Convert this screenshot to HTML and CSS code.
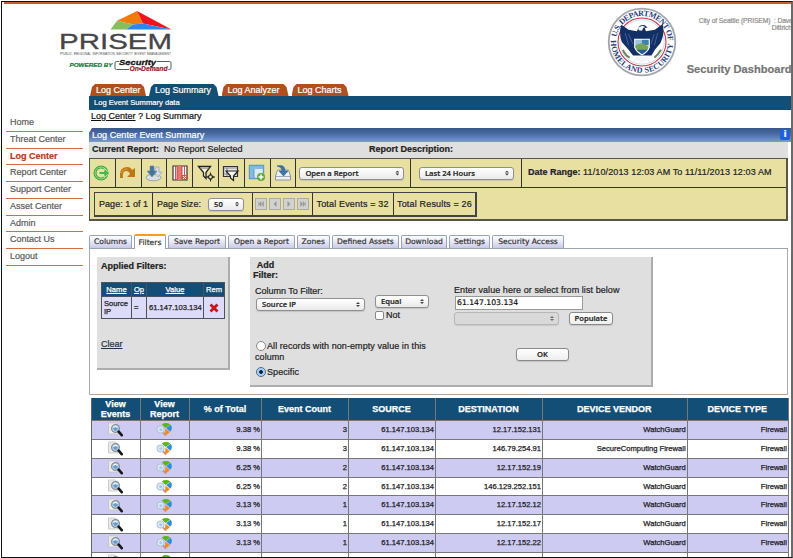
FILE: index.html
```html
<!DOCTYPE html>
<html lang="en">
<head>
<meta charset="utf-8">
<title>Security Dashboard</title>
<link rel="stylesheet" href="styles.css">
</head>
<body>
<svg class="defs" width="0" height="0">
  <symbol id="view" viewBox="0 1 16 15">
    <path d="M1 2h7l2 2v9H1z" fill="#f4f4f4" stroke="#c0c0c0" stroke-width=".8"/>
    <path d="M2.500 12V4l2-1" fill="none" stroke="#ddd"/>
    <circle cx="8" cy="7.500" r="3.900" fill="#b9d8f2" stroke="#8a8f96" stroke-width="1.300"/>
    <circle cx="8" cy="7.600" r="2.300" fill="#6a9dce"/>
    <path d="M6 6.600q2-2.400 4 0" fill="none" stroke="#e9f5ff" stroke-width="1.200"/>
    <path d="M11.200 10.600l3 3.600" stroke="#16181c" stroke-width="2.600" stroke-linecap="round"/>
  </symbol>
  <symbol id="pie" viewBox="0 0 16 14">
    <path d="M9 5.500L5.500 2.200Q9-.6 13.600 2.200z" fill="#5cb41c"/>
    <path d="M9.600 5.500l4.300-3q2.400 3.600-.6 6.500z" fill="#2c8fdc"/>
    <path d="M9 6l3.900 3.600Q11 12 8.300 12z" fill="#f58a1c"/>
    <path d="M6.300 9.400l3.200 3.300" stroke="#c98e76" stroke-width="1.700"/>
    <circle cx="4.300" cy="7" r="3.300" fill="#d8e8f6" stroke="#b4c2d2"/>
    <circle cx="4.500" cy="7.300" r="1.400" fill="#a9c8e8"/>
  </symbol>
</svg>
<div class="frame">
<header class="top">
  <svg class="logo" width="120" height="70" viewBox="56 6 120 70">
    <path d="M117 20.800L137 11l6 12.500-10 1z" fill="#f57a0c"/>
    <path d="M137 11l34.500 18.500L143 23.500z" fill="#f0131c"/>
    <path d="M117 20.800L133 24.500l-7 5h-15.500z" fill="#86bf5c"/>
    <path d="M133 24.500l10-1 28.500 6H126z" fill="#2f86ee"/>
    <text class="l-name" x="59" y="48.600" textLength="113" lengthAdjust="spacingAndGlyphs">PRISEM</text>
    <text class="l-sub" x="60" y="55.300" textLength="111" lengthAdjust="spacingAndGlyphs">Public Regional Information Security Event Management</text>
    <text class="l-pow" x="69.500" y="66.800" textLength="43" lengthAdjust="spacingAndGlyphs">POWERED BY</text>
    <path d="M119 61.500h-2.500q-1.500 0-1.500 1.500v5q0 1.500 1.500 1.500H129M157 61.500h12.500q1.500 0 1.500 1.500v5q0 1.500-1.500 1.500H168.500" fill="none" stroke="#35513f" stroke-width=".9"/>
    <text class="l-sec" x="119" y="65.200" textLength="37" lengthAdjust="spacingAndGlyphs">Security</text>
    <text class="l-dem" x="129.500" y="71" textLength="38" lengthAdjust="spacingAndGlyphs">On•Demand</text>
  </svg>
  <svg class="seal" width="70" height="70" viewBox="-35 -35 70 70">
    <circle r="33.300" fill="#fff" stroke="#a2a5ab" stroke-width="1.800"/>
    <path id="arcT" d="M-22.800 12.700A26.100 26.100 0 1 1 24.500 9" fill="none"/>
    <path id="arcB" d="M-31 -2.700A31.100 31.100 0 1 0 31 -2.700" fill="none"/>
    <text class="s-txt"><textPath href="#arcT" startOffset="18" textLength="76">U.S. DEPARTMENT OF</textPath></text>
    <text class="s-txt"><textPath href="#arcB" startOffset="1" textLength="97">HOMELAND SECURITY</textPath></text>
    <circle r="24" fill="#fff" stroke="#c33a50" stroke-width="1.100"/>
    <g transform="scale(1.120)">
    <circle r="19.800" fill="#fff" stroke="#c9d4e4" stroke-width=".8"/>
    <path d="M-3-13.500Q-1-16 2.500-15l2.500 2-2.500.5 1 3 8-1.500 7-5q2 9-2 17l-5 6-3 5H-8l-4-5-6-7q-3-8-.5-15.500L-12-11l7.500 1.500z" fill="#122f66"/>
    <path d="M-3.500-13l4-1.500 2.500 1-2 1-1 2.500-3-.5zM-5 13l-3 5 4-2 4 3 4-3 4 2-3-5z" fill="#f2f5f8"/>
    <path d="M-15-8l3 11M-12-7l4 9M14-8l-3 11M11-7L8 2" stroke="#46669b" stroke-width=".8"/>
    <path d="M-7-3h14v8q-2 5-7 7-5-2-7-7z" fill="#fff"/>
    <path d="M-6-2H0v5h-6z" fill="#9cc4dc"/><path d="M0-2h6v5H0z" fill="#3f83ae"/><path d="M-6 3L0 1l6 3q-1 5-6 7-4-2-6-6z" fill="#76a65a"/><path d="M-5 7h10l-5 4z" fill="#285a99"/>
    <path d="M-17 7q2 5 6 7M17 7q-3 5-6 7" stroke="#658760" stroke-width="1.800" fill="none"/>
    </g>
  </svg>
  <div class="who">
    <div class="user">City of Seattle (PRISEM)&nbsp; : Dave<br><span>Dittrich</span></div>
    <div class="dash">Security Dashboard</div>
  </div>
</header>
<div class="body">
<nav class="side">
  <a>Home</a><a>Threat Center</a><a class="on">Log Center</a><a>Report Center</a><a>Support Center</a><a>Asset Center</a><a>Admin</a><a>Contact Us</a><a>Logout</a>
</nav>
<main>
  <div class="maintabs"><span class="t1">Log Center</span><span class="t2 on">Log Summary</span><span class="t3">Log Analyzer</span><span class="t4">Log Charts</span></div>
  <div class="sub">Log Event Summary data</div>
  <div class="crumb"><u>Log Center</u> ? Log Summary</div>
  <div class="title"><span>Log Center Event Summary</span><i>i</i></div>
  <div class="report"><div><b>Current Report:</b><span>No Report Selected</span></div><b>Report Description:</b></div>
  <div class="tools">
    <div class="row1">
      <div class="ic"><svg viewBox="0 0 18 18"><circle cx="8" cy="9" r="6" fill="none" stroke="#42a63a" stroke-width="3"/><circle cx="8" cy="9" r="6" fill="none" stroke="#9bdc8b" stroke-width="1"/><path d="M6 7.500h5V4.500l6 4.500-6 4.500v-3H6z" fill="#4bb93d" stroke="#eaf7df" stroke-width=".7"/></svg></div>
      <div class="ic"><svg viewBox="0 0 18 18"><path d="M1 14Q0 3 8 3q4 0 5 3l3-2v9H8l3-3q-1-3-4-3-4 0-3 7z" fill="#bd7813"/><path d="M2.500 9Q4 4.500 8.500 5" stroke="#e0a447" fill="none"/></svg></div>
      <div class="ic"><svg viewBox="0 0 18 18"><ellipse cx="8.500" cy="13.500" rx="7.500" ry="3.300" fill="#d9dee3" stroke="#96a1ab"/><path d="M11 3h3v5h3l-4 5-4-5z" fill="#d6dce2" stroke="#98a4af" stroke-width=".7"/><path d="M5 2h4v5h3l-5 6-5-6h3z" fill="#47749b" stroke="#6d8ba5" stroke-width=".6"/></svg></div>
      <div class="ic"><svg viewBox="0 0 18 18"><path d="M2 2h14v14H2z" fill="#fff" stroke="#333" stroke-width="1.200"/><path d="M6 2h5v14H6z" fill="#e9776b"/><path d="M4.500 2v14M6 2v14M11 2v14M13.500 2v9" stroke="#a33" stroke-width=".8"/><path d="M11 11h5v5h-5z" fill="#df4e42"/><path d="M12 12l3 3m0-3l-3 3" stroke="#fff"/></svg></div>
      <div class="ic"><svg viewBox="0 0 18 18"><path d="M1.500 2.500h12L9 8.500v6L6.500 12V8.500z" fill="#f5f2cf" stroke="#222" stroke-width="1.300"/><path d="M3.500 4.300h8" stroke="#999"/><path d="M13.500 9.500L17 13l-3.500 3.500L10 13z" fill="#222"/><path d="M13.500 8.500v9M9 13h9" stroke="#222" stroke-width="1"/><circle cx="13.500" cy="13" r="1.400" fill="#e6dfa0"/></svg></div>
      <div class="ic"><svg viewBox="0 0 18 18"><path d="M1.500 2.500h14v10h-14z" fill="#e5e7e5" stroke="#333" stroke-width="1.200"/><path d="M2 4h13M2 10h13M5 4v8" stroke="#888" stroke-width="1.200"/><path d="M4 7h12l-4.500 5v4.500L8.500 14v-2z" fill="#f7f7f0" stroke="#222" stroke-width="1.200"/></svg></div>
      <div class="ic"><svg viewBox="0 0 18 18"><path d="M1.500 1.500h14v13h-14z" fill="#dceaf3" stroke="#5b9cc9" stroke-width="1.400"/><path d="M2 2h13v3H6v9H2z" fill="#83badd"/><path d="M6 5v9" stroke="#5b9cc9"/><circle cx="13" cy="13" r="4" fill="#62ab37"/><path d="M13 10.500v5M10.500 13h5" stroke="#fff" stroke-width="1.500"/></svg></div>
      <div class="ic"><svg viewBox="0 0 18 18"><path d="M3.500 6h11l2 6v4h-15v-4z" fill="#edf0f2" stroke="#8994a0"/><path d="M2 12.500h14" stroke="#a2abb4"/><path d="M3 2q8-2 8 5h3l-4.500 5L5 7h3Q8 3 3 2z" fill="#3d77a8" stroke="#275a87" stroke-width=".6"/></svg></div>
      <div class="s1"><span class="sel w105">Open a Report</span></div>
      <div class="s2"><span class="sel w95">Last 24 Hours</span></div>
      <div class="date"><b>Date Range:</b> 11/10/2013 12:03 AM To 11/11/2013 12:03 AM</div>
    </div>
    <div class="row2">
      <div class="p1">Page: 1 of 1</div>
      <div class="p2">Page Size:<span class="sel w36">50</span></div>
      <div class="p3"><svg viewBox="0 0 12 12"><path d="M3 3v6M6 3L3.500 6 6 9zM9 3L6.500 6 9 9z"/></svg><svg viewBox="0 0 12 12"><path d="M7.500 3L4.500 6l3 3z"/></svg><svg viewBox="0 0 12 12"><path d="M4.500 3l3 3-3 3z"/></svg><svg viewBox="0 0 12 12"><path d="M9 3v6M3 3l2.500 3L3 9zM6 3l2.500 3L6 9z"/></svg></div>
      <div class="p4">Total Events = 32</div>
      <div class="p5">Total Results = 26</div>
    </div>
  </div>
  <div class="tabs"><span class="a">Columns</span><span class="b on">Filters</span><span class="c">Save Report</span><span class="d">Open a Report</span><span class="e">Zones</span><span class="f">Defined Assets</span><span class="g">Download</span><span class="h">Settings</span><span class="j">Security Access</span></div>
  <div class="panel">
    <section class="applied">
      <b>Applied Filters:</b>
      <div class="ft">
        <div class="h"><u>Name</u></div><div class="h"><u>Op</u></div><div class="h"><u>Value</u></div><div class="h">Rem</div>
        <div>Source<br>IP</div><div>=</div><div>61.147.103.134</div><div class="x"><svg width="10" height="10" viewBox="0 0 10 10"><path d="M1.500 1.500l7 7M8.500 1.500l-7 7" stroke="#c4161c" stroke-width="2.800"/></svg></div>
      </div>
      <u>Clear</u>
    </section>
    <section class="add">
      <b class="addt">Add<br>Filter:</b>
      <div class="fields">
        <div class="f1">Column To Filter:<span class="sel">Source IP</span></div>
        <div class="f2"><span class="sel">Equal</span><label><i></i>Not</label></div>
        <div class="f3">Enter value here or select from list below<div class="inp">61.147.103.134</div><div class="pop"><span class="sel off"></span><span class="btn">Populate</span></div></div>
      </div>
      <div class="bottom">
        <div class="radios"><div><i class="rb"></i>All records with non-empty value in this<br>column</div><div class="sp"><i class="rb on"></i>Specific</div></div>
        <span class="btn ok">OK</span>
      </div>
    </section>
  </div>
  <div class="grid">
    <div class="r hd"><div>View<br>Events</div><div>View<br>Report</div><div>% of Total</div><div>Event Count</div><div>SOURCE</div><div>DESTINATION</div><div>DEVICE VENDOR</div><div>DEVICE TYPE</div></div>
    <div class="r odd"><div><svg><use href="#view"/></svg></div><div><svg><use href="#pie"/></svg></div><div>9.38 %</div><div>3</div><div>61.147.103.134</div><div>12.17.152.131</div><div>WatchGuard</div><div>Firewall</div></div>
    <div class="r"><div><svg><use href="#view"/></svg></div><div><svg><use href="#pie"/></svg></div><div>9.38 %</div><div>3</div><div>61.147.103.134</div><div>146.79.254.91</div><div>SecureComputing Firewall</div><div>Firewall</div></div>
    <div class="r odd"><div><svg><use href="#view"/></svg></div><div><svg><use href="#pie"/></svg></div><div>6.25 %</div><div>2</div><div>61.147.103.134</div><div>12.17.152.19</div><div>WatchGuard</div><div>Firewall</div></div>
    <div class="r"><div><svg><use href="#view"/></svg></div><div><svg><use href="#pie"/></svg></div><div>6.25 %</div><div>2</div><div>61.147.103.134</div><div>146.129.252.151</div><div>WatchGuard</div><div>Firewall</div></div>
    <div class="r odd"><div><svg><use href="#view"/></svg></div><div><svg><use href="#pie"/></svg></div><div>3.13 %</div><div>1</div><div>61.147.103.134</div><div>12.17.152.12</div><div>WatchGuard</div><div>Firewall</div></div>
    <div class="r"><div><svg><use href="#view"/></svg></div><div><svg><use href="#pie"/></svg></div><div>3.13 %</div><div>1</div><div>61.147.103.134</div><div>12.17.152.17</div><div>WatchGuard</div><div>Firewall</div></div>
    <div class="r odd"><div><svg><use href="#view"/></svg></div><div><svg><use href="#pie"/></svg></div><div>3.13 %</div><div>1</div><div>61.147.103.134</div><div>12.17.152.22</div><div>WatchGuard</div><div>Firewall</div></div>
    <div class="r"><div><svg><use href="#view"/></svg></div><div><svg><use href="#pie"/></svg></div><div></div><div></div><div></div><div></div><div></div><div></div></div>
  </div>
</main>
</div>
</div>
</body>
</html>
```
FILE: styles.css
```css
* { box-sizing: border-box; }
html, body { margin: 0; height: 558px; overflow: hidden; }
body { background: #fff; padding: 1px 0 0 1px; font: 9px/11px "Liberation Sans", Arial, sans-serif; color: #222; -webkit-text-stroke: .2px; }
.defs { display: block; height: 0; width: 0; }
.frame { width: 792px; height: 557px; border: 1px solid #111; border-right: 2px solid #6a6a6a; overflow: hidden; white-space: nowrap; }
.top { height: 82px; margin-left: 2px; border-top: 2px solid #c4602c; display: flex; align-items: flex-start; }
.logo { margin: 2px 0 0 52px; flex: none; }
.l-name { font-size: 22.5px; fill: #454547; stroke: #454547; stroke-width: .3px; }
.l-sub { font-size: 4.4px; font-variant: small-caps; fill: #555; stroke: none; }
.l-pow { font-size: 6px; font-weight: bold; font-style: italic; fill: #14783c; stroke: #14783c; stroke-width: .2px; }
.l-sec { font-size: 8px; font-weight: bold; font-style: italic; fill: #111; stroke: #111; stroke-width: .3px; }
.l-dem { font-size: 6.5px; font-weight: bold; font-style: italic; fill: #9c2030; stroke: #9c2030; stroke-width: .2px; }
.seal { margin: 3px 0 0 430.7px; flex: none; }
.s-txt { font: bold 8px "Liberation Serif", serif; fill: #27407c; stroke: none; }
.who { flex: none; width: 118px; margin-left: 10px; }
.user { margin: 12.5px 0 0 12px; font-size: 6.7px; line-height: 7px; color: #8c8c8c; letter-spacing: -.08px; }
.user span { margin-left: 73px; }
.dash { margin-top: 31px; font-size: 11.1px; line-height: 14px; font-weight: bold; color: #757575; }
.body { display: flex; }
.side { width: 77px; margin: 31px 0 0 4px; flex: none; }
.side a { display: block; height: 16.75px; padding-left: 4px; line-height: 15px; border-bottom: 1px solid #cf6f40; color: #5a5a5a; }
.side .on { font-weight: bold; color: #b03c18; }
main { width: 703px; margin-left: 6px; flex: none; }
.maintabs { height: 12px; display: flex; gap: 3px; padding-left: 1px; }
.maintabs span { height: 12px; line-height: 12px; background: #b2501d; color: #fff; padding-left: 6px; clip-path: polygon(0 100%, 2px 3px, 5px 0, calc(100% - 5px) 0, calc(100% - 2px) 3px, 100% 100%); }
.maintabs .on { background: #124e75; }
.t1 { width: 56px; } .t2 { width: 69.5px; } .t3 { width: 67px; } .t4 { width: 57px; }
.sub { height: 14px; line-height: 14px; background: #124e75; color: #fff; padding-left: 5px; font-size: 7.6px; }
.crumb { height: 18px; padding: 1px 0 0 2px; color: #111; }
.title { height: 14px; width: 702px; background: linear-gradient(#365789, #4b6da4 45%, #7c9cce); color: #fff; display: flex; justify-content: space-between; padding: 1px 1px 0 3px; line-height: 12px; font-size: 9.1px; clip-path: polygon(0 5px, 3px 0, 100% 0, 100% 100%, 0 100%); }
.title i { width: 10px; height: 11px; border-radius: 2px; background: #1f5fe0; font: bold 8px/11px "DejaVu Sans", sans-serif; text-align: center; }
.report { height: 16px; width: 699px; background: #dfdfdf; padding: 2px 0 0 3px; display: flex; }
.report > div { width: 277px; } .report span { margin-left: 5px; }
.tools { width: 699px; height: 63px; background: #e8e0a1; border: 2px solid #555548; border-width: 1px 2px 2px 1px; }
.row1 { display: flex; height: 29px; border-bottom: 1px solid #333; }
.row1 > div { border-right: 1px solid #333; display: flex; align-items: center; }
.ic { width: 25.8px; justify-content: center; flex: none; }
.ic svg { width: 18px; height: 18px; }
.s1 { width: 114.6px; padding-left: 3px; } .s2 { width: 111px; padding-left: 8px; }
.row1 .date { border: 0; padding-left: 6px; letter-spacing: .12px; display: block; line-height: 27px; }
.date b { letter-spacing: 0; }
.sel { display: block; position: relative; height: 13px; border: 1px solid #8f8f8f; border-radius: 3px; background: linear-gradient(#fff, #f5f5f5 50%, #e9e9e9); font: 600 7.6px/11px "Open Sans", "DejaVu Sans", sans-serif; padding-left: 5px; color: #222; box-shadow: 0 1px 1px #aaa8; }
.sel::after { content: ""; position: absolute; right: 4px; top: 3px; width: 4px; height: 5px; background: #444; clip-path: polygon(50% 0, 100% 2px, 0 2px, 0 3px, 100% 3px, 50% 100%, 0 3px, 0 2px); }
.w105 { width: 105px; } .w95 { width: 95px; } .w36 { width: 36px; margin-left: 7px; }
.row2 { display: flex; width: 383px; height: 25px; margin: 4px 0 0 4px; border: 1px solid #444; border-width: 1px 2px 2px 1px; letter-spacing: .05px; }
.row2 > div { height: 22px; border-right: 1px solid #333; padding-left: 4px; display: flex; align-items: center; }
.row2 .p5 { border: 0; padding-left: 3px; }
.p1 { width: 58px; } .p2 { width: 99.5px; } .p3 { width: 60px; gap: 2px; } .p4 { width: 81.5px; }
.p4, .p5 { letter-spacing: .17px; }
.row2 .p3 { padding-left: 2px; }
.p3 svg { width: 12px; height: 12px; background: #d2d2d0; border: 1px solid #aaa; fill: #999; stroke: #999; stroke-width: .6; }
.tabs { display: flex; align-items: flex-end; height: 28px; width: 699px; border-bottom: 1px solid #9aa5ad; }
.tabs span { height: 13px; margin-right: 2px; text-align: center; border: 1px solid #97a3b6; border-bottom: 0; border-radius: 2px 2px 0 0; background: linear-gradient(#fff, #e6e6f6 50%, #c9c9e8); font: 7.6px/12px "DejaVu Sans", sans-serif; color: #333; flex: none; }
.tabs .on { height: 15px; margin-bottom: -1px; background: #fff; border-top: 2px solid #f0a020; line-height: 13px; }
.tabs .a { width: 43px; } .tabs .b { width: 32px; } .tabs .c { width: 58px; } .tabs .d { width: 67px; } .tabs .e { width: 32.5px; } .tabs .f { width: 67.5px; } .tabs .g { width: 46px; } .tabs .h { width: 41px; } .tabs .j { width: 72px; }
.panel { height: 146px; width: 699px; border: 1px solid #aaa; border-top: 0; display: flex; align-items: flex-start; padding: 8px 0 0 7px; }
.applied { width: 133px; height: 113px; background: #dfdfdf; border: solid #adadad; border-width: 0 2px 2px 0; padding: 4px 0 0 4px; display: flex; flex-direction: column; align-items: flex-start; }
.applied > u { margin-top: 20px; color: #234; }
.ft { display: grid; grid-template: 13px 21px / 29px 14px 56px 20px; gap: 1px; width: 124px; margin-top: 10px; padding: 1px; background: #49545e; font-size: 7.6px; line-height: 8px; }
.ft div { background: #dcdcfa; padding-left: 2px; display: flex; align-items: center; -webkit-text-stroke: .25px; }
.ft .h { background: #124e75; color: #fff; justify-content: center; padding: 0; }
.ft .x { justify-content: center; padding: 0; }
.add { width: 403px; height: 130px; margin-left: 20px; background: #dfdfdf; border: solid #adadad; border-width: 0 2px 2px 0; padding: 3px 0 0 5px; }
.addt { display: block; width: 25px; line-height: 10px; text-align: center; margin-left: -2px; }
.fields { display: flex; height: 56px; margin-top: 5px; }
.f1 { width: 120px; padding-top: 1px; } .f1 .sel { width: 109px; margin: 1px 0 0 1px; }
.f2 { width: 79px; padding-top: 10px; } .f2 .sel { width: 54px; }
.f2 label { display: flex; align-items: center; margin-top: 2px; gap: 2px; }
.f2 i { width: 9px; height: 9px; border: 1px solid #888; border-radius: 2px; background: #fff; }
.f3 { letter-spacing: .07px; }
.inp { width: 128px; height: 14px; margin: 0 0 2px 1px; border: 1px solid #999; background: #fff; font: 7.7px/12px "DejaVu Sans", sans-serif; letter-spacing: 0; color: #111; padding-left: 1px; }
.pop { display: flex; gap: 10px; }
.off { width: 105px; background: #d8d8d8; border-color: #aaa; opacity: .75; }
.btn { height: 13px; width: 44px; border: 1px solid #8a8a8a; border-radius: 3px; background: linear-gradient(#fff, #eee); text-align: center; font: 600 7.6px/11px "Open Sans", sans-serif; letter-spacing: 0; box-shadow: 0 1px 1px #aaa8; }
.bottom { display: flex; }
.radios { width: 261px; line-height: 11px; letter-spacing: .07px; } .radios .sp { margin-top: 4px; }
.rb { display: inline-block; width: 10px; height: 10px; margin: 0 1px; border: 1px solid #888; border-radius: 50%; background: #fff; vertical-align: -2px; }
.radios .on { background: radial-gradient(#123 0 1.5px, #9cc8f2 2.2px, #c8e2fa); border-color: #4a6a94; }
.ok { width: 53px; margin-top: 7px; }
.grid { margin: 3px 0 0 2px; width: 698px; border-left: 1px solid #666; }
.r { display: grid; }
.grid .r { grid-template-columns: 49px 49px 72px 87px 87px 107px 144.7px 101.3px; height: 18.85px; font-size: 7.6px; -webkit-text-stroke: .25px; color: #1c1c24; }
.grid .r > div { border: solid #777; border-width: 0 1px 1px 0; text-align: right; padding-right: 1px; line-height: 18.5px; overflow: hidden; }
.grid .odd { background: #cdcbf2; }
.grid .r > div:nth-child(-n+2) { display: flex; align-items: center; justify-content: center; }
.grid svg { width: 17px; height: 15px; }
.grid .hd { height: 23px; background: #124e75; color: #fff; font-size: 9px; font-weight: bold; }
.grid .hd > div, .grid .hd > div:nth-child(-n+2) { text-align: center; line-height: 22px; display: block; }
.grid .hd > div:nth-child(-n+2) { line-height: 10px; padding-top: 1px; }
```
